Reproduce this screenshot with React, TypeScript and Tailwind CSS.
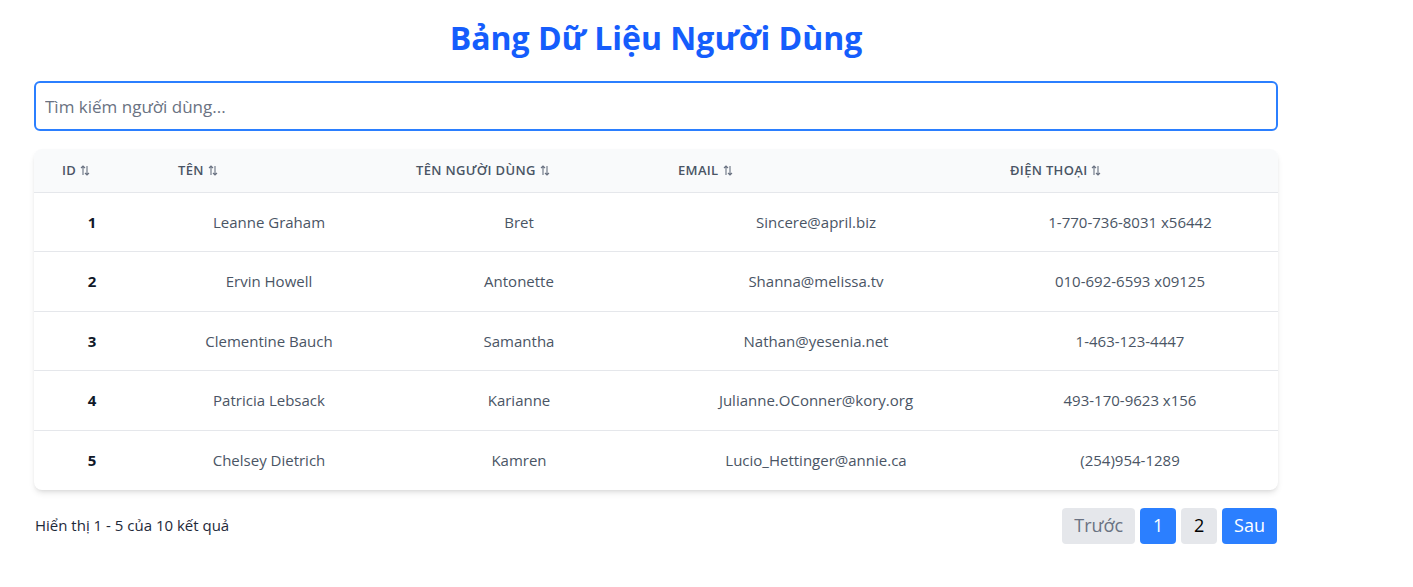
import { useState } from "react";

const users = [
  { id: 1, name: "Leanne Graham", username: "Bret", email: "Sincere@april.biz", phone: "1-770-736-8031 x56442" },
  { id: 2, name: "Ervin Howell", username: "Antonette", email: "Shanna@melissa.tv", phone: "010-692-6593 x09125" },
  { id: 3, name: "Clementine Bauch", username: "Samantha", email: "Nathan@yesenia.net", phone: "1-463-123-4447" },
  { id: 4, name: "Patricia Lebsack", username: "Karianne", email: "Julianne.OConner@kory.org", phone: "493-170-9623 x156" },
  { id: 5, name: "Chelsey Dietrich", username: "Kamren", email: "Lucio_Hettinger@annie.ca", phone: "(254)954-1289" },
];

function SortIcon() {
  return (
    <svg width="10" height="11" viewBox="0 0 10 11" className="inline-block ml-1 -mt-px text-gray-500" fill="none" stroke="currentColor" strokeWidth="1.1">
      <path d="M3 10V1M1 3l2-2 2 2" />
      <path d="M7 1v9M5 8l2 2 2-2" />
    </svg>
  );
}

export default function App() {
  const [q, setQ] = useState("");

  const cols = [
    { label: "ID", w: "w-[116px]" },
    { label: "Tên", w: "w-[238px]" },
    { label: "Tên người dùng", w: "w-[262px]" },
    { label: "Email", w: "w-[332px]" },
    { label: "Điện thoại", w: "w-[296px]" },
  ];

  return (
    <div className="min-h-screen bg-white font-['Open_Sans',sans-serif]">
      <div className="ml-[34px] w-[1244px] pt-[18px]">
        <h1 className="text-center text-[32px] leading-10 font-bold text-blue-600">
          Bảng Dữ Liệu Người Dùng
        </h1>

        <input
          autoFocus
          value={q}
          onChange={(e) => setQ(e.target.value)}
          placeholder="Tìm kiếm người dùng..."
          className="mt-[23px] block w-full h-[50px] rounded-md border-2 border-blue-500 px-[9px] text-[17px] text-gray-700 placeholder:text-gray-500 outline-none"
        />

        {/* Table */}
        <div className="mt-[18px] rounded-lg bg-white shadow-md overflow-hidden">
          <table className="w-full table-fixed border-collapse">
            <thead className="bg-gray-50 border-b border-gray-200">
              <tr>
                {cols.map((c) => (
                  <th
                    key={c.label}
                    className={`${c.w} h-[43px] px-[28px] text-left text-[13px] font-semibold uppercase text-gray-600 tracking-wide`}
                  >
                    {c.label}
                    <SortIcon />
                  </th>
                ))}
              </tr>
            </thead>
            <tbody className="divide-y divide-gray-200">
              {users.map((u) => (
                <tr key={u.id} className="h-[59.5px] text-center text-[15px] text-gray-600">
                  <td className="font-bold text-gray-900">{u.id}</td>
                  <td>{u.name}</td>
                  <td>{u.username}</td>
                  <td>{u.email}</td>
                  <td>{u.phone}</td>
                </tr>
              ))}
            </tbody>
          </table>
        </div>

        {/* Footer */}
        <div className="mt-[18px] flex items-center justify-between">
          <div className="pl-px text-[15px] text-gray-800">Hiển thị 1 - 5 của 10 kết quả</div>
          <div className="flex gap-[5px] pr-px">
            <button className="h-9 px-3 rounded bg-gray-200 text-gray-500 text-[18px]">Trước</button>
            <button className="h-9 w-9 rounded bg-blue-500 text-white text-[18px]">1</button>
            <button className="h-9 w-9 rounded bg-gray-200 text-black text-[18px]">2</button>
            <button className="h-9 px-3 rounded bg-blue-500 text-white text-[18px]">Sau</button>
          </div>
        </div>
      </div>
    </div>
  );
}
